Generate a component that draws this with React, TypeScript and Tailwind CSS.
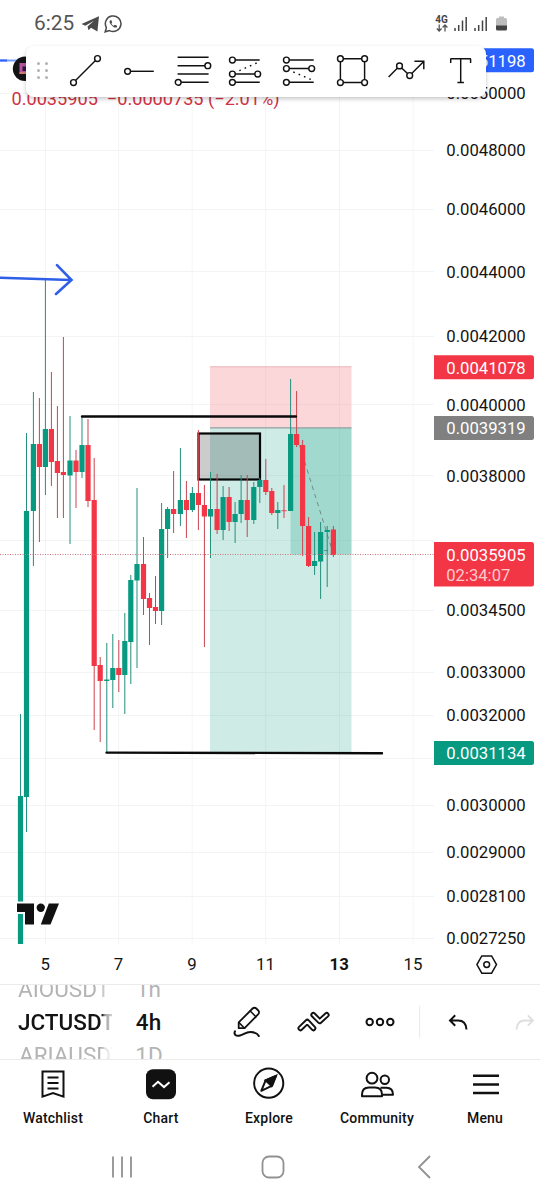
import type { ReactNode } from "react";

// [x, high, bodyTop, bodyBottom, low, direction]
type Candle = [number, number, number, number, number, "up" | "down"];

const candles: Candle[] = [
  [20.5, 714, 796, 944, 944, "up"],
  [26.5, 433, 511, 797, 832, "up"],
  [33.4, 392, 444, 511, 566, "up"],
  [39.4, 398, 444, 467, 542, "down"],
  [45.4, 280, 429, 467, 495, "up"],
  [51.4, 372, 429, 462, 486, "down"],
  [57.4, 406, 461, 473, 518, "down"],
  [63.4, 337, 472, 475, 518, "down"],
  [70, 416, 460.5, 475.5, 544, "up"],
  [76, 450, 460.5, 472, 508, "down"],
  [82, 416, 445, 472, 478, "up"],
  [88, 419, 445, 501, 507, "down"],
  [94.2, 458, 500, 666, 730, "down"],
  [100.2, 657, 665, 681, 742, "down"],
  [106.8, 643, 679.5, 681, 752, "up"],
  [112.8, 634, 668, 680, 708, "up"],
  [118.8, 640, 668, 675, 692, "down"],
  [124.8, 613, 641, 675, 714, "up"],
  [130.8, 575, 580, 642, 684, "up"],
  [137, 488, 564, 580.5, 668, "up"],
  [143.5, 537, 564, 599, 615, "down"],
  [149.5, 593, 598, 608, 645, "down"],
  [155.5, 576, 607, 611, 624, "down"],
  [161.6, 503, 529, 611, 625, "up"],
  [167.6, 507, 509, 529, 558, "up"],
  [173.6, 471, 509, 514, 533, "down"],
  [180.4, 448, 500, 514, 526, "up"],
  [186.4, 481, 500, 510, 538, "down"],
  [192.4, 487, 493, 510, 512, "up"],
  [198.4, 430, 493, 505, 530, "down"],
  [204.4, 485, 505, 516.5, 647, "down"],
  [210.5, 472, 509, 516.5, 558, "up"],
  [217.1, 474, 509, 530, 534, "down"],
  [223.1, 486, 497, 530, 540, "up"],
  [229.1, 487, 497, 522, 531, "down"],
  [235.1, 502, 514, 522, 543, "up"],
  [241.1, 475, 500, 514, 523, "up"],
  [247.2, 475, 500, 520, 537, "down"],
  [253.8, 482, 487, 520, 524, "up"],
  [259.8, 478, 480, 487, 503, "up"],
  [265.8, 459, 480, 492, 495, "down"],
  [271.8, 488, 491, 513, 515, "down"],
  [277.8, 502, 510, 513, 529, "up"],
  [284, 485, 510.3, 511.2, 518, "down"],
  [290.6, 379, 434, 511, 511, "up"],
  [296.6, 391, 434, 445, 447, "down"],
  [302.6, 440, 445, 526, 556, "down"],
  [308.6, 517, 526, 566, 567, "down"],
  [314.6, 532, 561, 566, 575, "up"],
  [320.6, 522, 532, 561.5, 599, "up"],
  [327.2, 526, 530, 532, 587, "up"],
  [333.4, 526, 529.5, 555, 557, "down"],
];

const prices: [string, number][] = [
  ["0.0050000", 93.5],
  ["0.0048000", 150.5],
  ["0.0046000", 209.5],
  ["0.0044000", 271.8],
  ["0.0042000", 336.3],
  ["0.0040000", 404.8],
  ["0.0038000", 475.8],
  ["0.0034500", 610],
  ["0.0033000", 672],
  ["0.0032000", 715],
  ["0.0030000", 805],
  ["0.0029000", 852.3],
  ["0.0028100", 896],
  ["0.0027250", 938.5],
];

const days: [string, number][] = [
  ["5", 45.5],
  ["7", 118.7],
  ["9", 192.2],
  ["11", 265.7],
  ["13", 339.5],
  ["15", 413.2],
];

const priceTags = [
  { label: "0.0051198", y: 48.3, fill: "#2962ff" },
  { label: "0.0041078", y: 355.2, fill: "#f23645" },
  { label: "0.0039319", y: 416, fill: "#808080" },
  { label: "0.0031134", y: 741, fill: "#089981" },
];

function PriceChart() {
  return (
    <svg viewBox="0 46 540 938" className="block h-[938px] w-full" fontFamily="Roboto, sans-serif">
      {/* Grid */}
      <g stroke="#f3f5f5" strokeWidth="1">
        {[...prices.map(([, y]) => y), 540.5, 758.5].map((y) => (
          <line key={y} x1="0" x2="434" y1={Math.floor(y) + 0.5} y2={Math.floor(y) + 0.5} />
        ))}
        {days.map(([d, x]) => (
          <line key={d} x1={x} x2={x} y1="46" y2="944" />
        ))}
      </g>

      {/* Short position */}
      <rect x="210" y="366.5" width="141.5" height="61.5" fill="#f23645" fillOpacity="0.2" />
      <rect x="210" y="428" width="141.5" height="324.5" fill="#089981" fillOpacity="0.2" />
      <rect x="290.5" y="428" width="61" height="126.5" fill="#089981" fillOpacity="0.22" />
      <path d="M210 366.8H351.5" stroke="#e3a5aa" strokeWidth="0.7" />
      <path d="M210 427.8H351.5" stroke="#8fa19d" strokeWidth="1.2" />
      <path d="M297 437L333 553M324 550.5h4M334 545l-1 8" stroke="#6f8d87" strokeDasharray="4.5 4" fill="none" />

      <rect x="198.5" y="433.5" width="61.5" height="46" fill="#000" fillOpacity="0.2" stroke="#050505" strokeWidth="2.2" />

      {/* Candles */}
      {candles.map(([x, high, top, bottom, low, dir]) => (
        <g key={x} fill={dir === "up" ? "#089981" : "#f23645"}>
          <rect x={x - 0.5} y={high} width="1" height={low - high} fill={dir === "up" ? "#23907e" : "#c94551"} />
          <rect x={x - 2.6} y={top} width="5.2" height={bottom - top} />
        </g>
      ))}
      <path d="M0 554.5H434" stroke="#c9737c" strokeDasharray="1 1.5" />

      {/* Drawn lines */}
      <path d="M82 416.5H296M106.5 752.6L382 753.2" stroke="#0a0a0a" strokeWidth="2.4" strokeLinecap="round" />
      <path d="M0 277.8L71 280M57 265.2L71.5 280L56 294" fill="none" stroke="#2f5fe8" strokeWidth="2.6" strokeLinecap="round" />
      <path d="M0 60.5H26" stroke="#7da0ff" strokeWidth="2" />
      <path d="M0 60.5H7" stroke="#2962ff" strokeWidth="2" />
      <circle cx="25" cy="68.8" r="12.2" fill="#131316" />
      <rect x="19.5" y="63" width="9" height="11" fill="#b5549c" />
      <rect x="22.5" y="66.5" width="4" height="4.5" fill="#2b173f" />
      <path d="M19.5 73h9" stroke="#e08a62" strokeWidth="1.5" />

      <text x="11.5" y="105" fontSize="18.15" fill="#cf3346" xmlSpace="preserve">
        0.0035905  −0.0000735 (−2.01%)
      </text>

      {/* Logo */}
      <g fill="#111" stroke="#fff" strokeWidth="4" paintOrder="stroke">
        <path d="M17 903.5H34V924.5H25V912H17Z" />
        <circle cx="40.8" cy="907.8" r="4.2" />
        <path d="M48.8 903.5H59L50.5 924.5H40.8Z" />
      </g>
      <path d="M18 914.5h4v11h1v18.5h-5Z" fill="#089981" />

      {/* Price scale */}
      <g fontSize="16.7" fill="#131313">
        {prices.map(([label, y]) => (
          <text key={label} x="446.3" y={y + 5.8}>
            {label}
          </text>
        ))}
      </g>
      {priceTags.map((t) => (
        <g key={t.label}>
          <path d={`M434 ${t.y}h97.5a2.5 2.5 0 0 1 2.5 2.5v19a2.5 2.5 0 0 1 -2.5 2.5H434Z`} fill={t.fill} />
          <text x="446.3" y={t.y + 18.3} fontSize="16.7" fill="#fff">
            {t.label}
          </text>
        </g>
      ))}
      <path d="M434 542h97.5a2.5 2.5 0 0 1 2.5 2.5v39.5a2.5 2.5 0 0 1 -2.5 2.5H434Z" fill="#f23645" />
      <text x="446.3" y="561" fontSize="16.7" fill="#fff">
        0.0035905
      </text>
      <text x="446.3" y="580.8" fontSize="16.6" fill="#fcc9cd">
        02:34:07
      </text>

      {/* Time scale */}
      <g fontSize="16.8" fill="#131313" textAnchor="middle">
        {days.map(([d, x]) => (
          <text key={d} x={x - 0.3} y="970.4" fontWeight={d === "13" ? 700 : 400}>
            {d}
          </text>
        ))}
      </g>
      <g fill="none" stroke="#131313" strokeWidth="1.5">
        <path d="M481.8 956h9.8l4.9 8.6l-4.9 8.6h-9.8l-4.9-8.6Z" />
        <circle cx="486.7" cy="964.6" r="2.9" />
      </g>
    </svg>
  );
}

function Dot({ x, y }: { x: number; y: number }) {
  return <circle cx={x} cy={y} r="2.9" fill="#fff" />;
}

const drawingTools: ReactNode[] = [
  <>
    <path d="M5.5 30.5L29.5 6.5" />
    <Dot x={5.5} y={30.5} />
    <Dot x={29.5} y={6.5} />
  </>,
  <>
    <path d="M6.6 19.3H32.8" />
    <Dot x={6.6} y={19.3} />
  </>,
  <>
    <path d="M2.6 5.3h31M2.6 13.7h31M2.6 22h31M2.6 30.3h31" />
    <Dot x={32.8} y={13.7} />
    <Dot x={3.2} y={30.3} />
  </>,
  <>
    <path d="M4.4 8h27.3M4.4 22h25M4.4 30.3h27.3" />
    <path d="M11.3 18.7L29.4 10.7" strokeDasharray="1.6 4.2" />
    <Dot x={4.4} y={8} />
    <Dot x={4.4} y={22} />
    <Dot x={29.7} y={22} />
    <Dot x={4.4} y={30.3} />
  </>,
  <>
    <path d="M4.4 8h27.3M4.4 16.5h25M4.4 30.3h27.3" />
    <path d="M11.3 20L29.4 27.7" strokeDasharray="1.6 4.2" />
    <Dot x={4.4} y={8} />
    <Dot x={4.4} y={16.5} />
    <Dot x={29.7} y={16.5} />
    <Dot x={4.4} y={30.3} />
  </>,
  <>
    <path d="M5.4 6.7H29.6V30.5H5.4Z" />
    <Dot x={5.4} y={6.7} />
    <Dot x={29.6} y={6.7} />
    <Dot x={5.4} y={30.5} />
    <Dot x={29.6} y={30.5} />
  </>,
  <>
    <path d="M0.6 25L11.5 13.9L21.7 23.5L35.7 9.5M26.4 9.3H35.8V17.2" />
    <Dot x={11.5} y={13.9} />
    <Dot x={21.7} y={23.5} />
  </>,
  <path d="M8.7 11V7.2Q8.7 6.7 9.2 6.7H28.1Q28.6 6.7 28.6 7.2V11M18.7 6.7V30.5M15.4 30.5h6.5" />,
];

function DrawingToolbar() {
  return (
    <div className="absolute top-[46px] left-[26px] flex h-[51px] w-[460px] items-start rounded-lg bg-white pt-[6px] shadow-[0_2px_4px_rgba(0,0,0,0.22)]">
      <div className="mt-[10px] ml-[9.5px] grid w-[23.8px] shrink-0 grid-cols-[8px_8px] gap-y-1">
        {[0, 1, 2, 3, 4, 5].map((i) => (
          <span key={i} className="ml-px size-[3px] rounded-full bg-[#b2b2b2]" />
        ))}
      </div>
      {drawingTools.map((tool, i) => (
        <div key={i} className="flex w-[53.4px] shrink-0 justify-center">
          <svg width="36" height="36" className="overflow-visible" fill="none" stroke="#111" strokeWidth="1.45">
            {tool}
          </svg>
        </div>
      ))}
    </div>
  );
}

function StatusBar() {
  return (
    <div className="flex h-[46px] items-center pt-px pr-[33px] pl-[34px]">
      <span className="w-[40px] text-[20.8px] leading-none text-[#555]">6:25</span>
      <svg width="19" height="18" className="mt-px ml-[7px]" fill="#4a4a4a">
        <path d="M0.5 9L18 1.2L16.4 16.6L10 12.8L7.5 15.2L6.5 11.4L13 5.8L4.3 10.8Z" />
      </svg>
      <svg width="18" height="18" viewBox="0 0 18 18" className="ml-[4px]" fill="none" stroke="#4a4a4a" strokeWidth="1.5">
        <path d="M1.2 16.8L2.4 12.6A7.8 7.8 0 1 1 5.5 15.6Z" />
        <path d="M6 5.2c-1.2 2 .2 3.6 1.8 5.2s3.5 2.9 5.2 1.5v-1.1l-2.2-1-1 1c-1-.4-2-1.3-2.4-2.4l.8-.9-.8-2.3Z" fill="#4a4a4a" stroke="none" />
      </svg>
      <div className="ml-auto flex w-[13px] flex-col items-center">
        <span className="text-[10px] leading-[9px] font-bold text-[#444]">4G</span>
        <svg width="12" height="8" fill="none" stroke="#555" strokeWidth="1.3">
          <path d="M3.2 0.5V7M0.8 4.5L3.2 7L5.6 4.5M9 7.5V1M6.6 3.5L9 1L11.4 3.5" />
        </svg>
      </div>
      {[0, 1].map((i) => (
        <svg key={i} width="14" height="15" className="ml-[6px]" strokeWidth="1.5">
          <path d="M1 12v3M4.7 9v6M8.5 4.5v10.5M12.2 1v14" stroke="#444" />
        </svg>
      ))}
      <svg width="11" height="15" className="ml-[8px]">
        <path d="M3 0.5h5v1.5h1.5q1.5 0 1.5 1.5v6.5H0V3.5q0-1.5 1.5-1.5H3Z" fill="#bdbdbd" />
        <path d="M0 9.5h11v3.5q0 1.5-1.5 1.5h-8q-1.5 0-1.5-1.5Z" fill="#444" />
      </svg>
    </div>
  );
}

function SymbolBar() {
  return (
    <div className="flex h-[76px] items-center overflow-hidden border-y border-[#ebebeb] pl-[18px] text-[22.5px] leading-[33px] text-[#131313]">
      {/* Symbol and interval wheels */}
      <div className="flex h-full w-[94px] shrink-0 flex-col justify-center overflow-hidden [mask-image:linear-gradient(to_right,#000_84px,rgba(0,0,0,0.4)_87px,rgba(0,0,0,0.2))]">
        <span className="h-[33px] shrink-0 text-[#b4b4b4]">AIOUSDT</span>
        <span className="h-[33px] shrink-0 font-medium">JCTUSDT</span>
        <span className="h-[33px] shrink-0 pl-px text-[#b4b4b4]">ARIAUSDT</span>
      </div>
      <div className="ml-0.5 flex h-full w-[69px] shrink-0 flex-col items-center justify-center overflow-hidden">
        <span className="h-[33px] shrink-0 text-[#b4b4b4]">1h</span>
        <span className="h-[33px] shrink-0 font-medium">4h</span>
        <span className="h-[33px] shrink-0 pl-px text-[#b4b4b4]">1D</span>
      </div>
      <div className="ml-[31px] flex shrink-0 items-center">
        <div className="flex w-[66.5px] justify-center">
          <svg width="28" height="32" fill="none" stroke="#111" strokeWidth="1.8" strokeLinecap="round">
            <path d="M5.7 16.4L19.6 2.5a2.6 2.6 0 0 1 3.7 0l2 2a2.6 2.6 0 0 1 0 3.7L11.6 22.2H5.7Z" strokeLinejoin="round" />
            <path d="M17.2 5l5.7 5.7M6 16.6l5.6 5.6" strokeWidth="1.5" />
            <path d="M2 25.3c-1.5 3 .8 5.3 5 4.2c4-1.1 6-3.5 10.5-3.4c4 .1 7 1.4 8.3 3.9" strokeWidth="2" />
          </svg>
        </div>
        <div className="flex w-[66.5px] justify-center">
          <svg width="34" height="24" fill="none" strokeLinecap="round" strokeLinejoin="round">
            <path d="M3.4 18.3L10.3 11.7L16.4 18.3M16.3 4.9L22.7 11.3L29.7 4.9" stroke="#111" strokeWidth="5.8" />
            <path d="M3.4 18.3L10.3 11.7L16.4 18.3M16.3 4.9L22.7 11.3L29.7 4.9" stroke="#fff" strokeWidth="2" />
          </svg>
        </div>
        <div className="flex w-[66.5px] justify-center">
          <svg width="30" height="10" fill="none" stroke="#111" strokeWidth="2">
            <circle cx="4.7" cy="5" r="3.2" />
            <circle cx="15" cy="5" r="3.2" />
            <circle cx="25.3" cy="5" r="3.2" />
          </svg>
        </div>
      </div>
      <div className="ml-[5px] h-8 w-px shrink-0 bg-[#ebebeb]" />
      <div className="ml-[5px] flex w-[67px] shrink-0 justify-center">
        <svg width="20" height="17" fill="none" stroke="#111" strokeWidth="2" className="mt-px">
          <path d="M7.2 1.3L2 6.5L7.2 11.7M2 6.5H10Q18 6.5 18.5 15.5" />
        </svg>
      </div>
      <div className="flex w-[67px] shrink-0 justify-center">
        <svg width="20" height="17" fill="none" stroke="#dedede" strokeWidth="1.8" className="mt-px">
          <path d="M12.8 1.3L18 6.5L12.8 11.7M18 6.5H10Q2 6.5 1.5 15.5" />
        </svg>
      </div>
    </div>
  );
}

const tabs: { label: string; icon: ReactNode }[] = [
  {
    label: "Watchlist",
    icon: (
      <>
        <path d="M5.5 3.5H26.5V28.7L16 25L5.5 28.7Z" />
        <path d="M10.5 9.5h11M10.5 15h11M10.5 20.5h11" />
      </>
    ),
  },
  {
    label: "Chart",
    icon: (
      <>
        <rect x="1" y="1.3" width="30" height="30" rx="7" fill="#111" stroke="none" />
        <path d="M7.5 18.8L13 13.8L19 19.1L24.5 14.3" stroke="#fff" />
      </>
    ),
  },
  {
    label: "Explore",
    icon: (
      <>
        <circle cx="15.7" cy="15.2" r="14.6" />
        <path d="M23 7.8L19.2 17.6L8.3 22.8L12.6 12.4Z" strokeLinejoin="round" />
        <path d="M23 7.8L12.6 12.4L18.6 18Z" fill="#111" />
      </>
    ),
  },
  {
    label: "Community",
    icon: (
      <>
        <circle cx="11" cy="10.2" r="5.4" />
        <circle cx="23.8" cy="11.7" r="4.2" />
        <path d="M1 28.300v-1.500q0-7.300 7-7.300h6q7 0 7 7.300v1.500Z" strokeLinejoin="round" />
        <path d="M19.500 19.700h6q6.500 0 6.500 7H21" strokeLinejoin="round" />
      </>
    ),
  },
  {
    label: "Menu",
    icon: <path d="M4 7.700h26M4 16.400h26M4 25h26" strokeWidth="2.500" />,
  },
];

function TabBar() {
  return (
    <nav className="-ml-px grid h-[70px] w-full grid-cols-5">
      {tabs.map((tab) => (
        <div key={tab.label} className="flex flex-col items-center pt-[8px]">
          <svg width="32" height="32" className="overflow-visible" fill="none" stroke="#111" strokeWidth="2">
            {tab.icon}
          </svg>
          <span className="mt-[9px] text-[14px] leading-[18px] font-medium tracking-[0.2px] text-[#111]">{tab.label}</span>
        </div>
      ))}
    </nav>
  );
}

function SystemNav() {
  return (
    <div className="grid h-[70px] grid-cols-3 items-center justify-items-center pt-[3px] pr-[40px] pl-[46px]">
      <svg width="22" height="22" stroke="#919191" strokeWidth="1.8">
        <path d="M2 0.5v21M11 0.5v21M20 0.5v21" />
      </svg>
      <svg width="24" height="24" fill="none" stroke="#919191" strokeWidth="1.8">
        <rect x="1.5" y="1.5" width="21" height="21" rx="6.5" />
      </svg>
      <svg width="14" height="24" fill="none" stroke="#919191" strokeWidth="1.8">
        <path d="M13 1L2 12L13 23" />
      </svg>
    </div>
  );
}

export default function App() {
  return (
    <div className="relative h-[1200px] w-[540px] overflow-hidden bg-white font-['Roboto',sans-serif]">
      <StatusBar />
      <PriceChart />
      <DrawingToolbar />
      <SymbolBar />
      <TabBar />
      <SystemNav />
    </div>
  );
}
